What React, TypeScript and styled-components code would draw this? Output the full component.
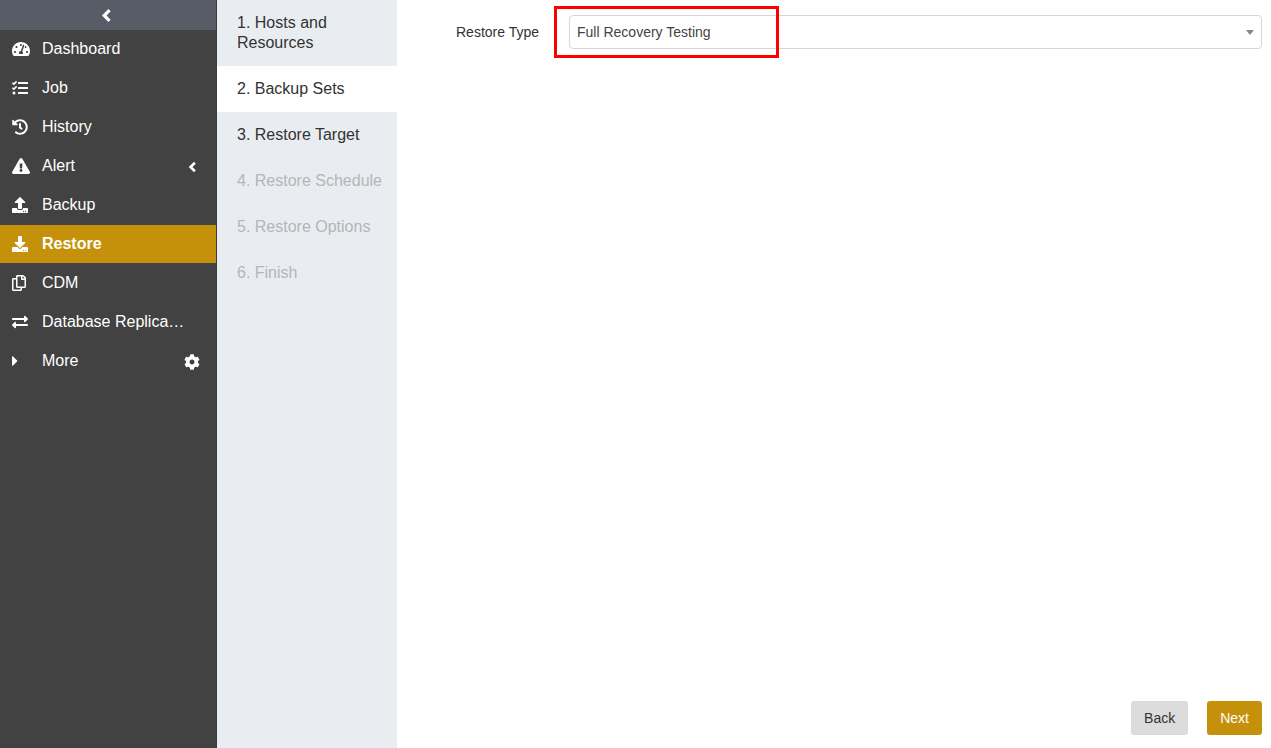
import React from 'react';
import styled, { createGlobalStyle, css } from 'styled-components';
import type { IconType } from 'react-icons';
import {
  FaCaretRight,
  FaCog,
  FaDownload,
  FaExchangeAlt,
  FaExclamationTriangle,
  FaHistory,
  FaRegCopy,
  FaTachometerAlt,
  FaTasks,
  FaUpload,
} from 'react-icons/fa';

const GlobalStyle = createGlobalStyle`
  *, *::before, *::after { box-sizing: border-box; }
  body {
    margin: 0;
    background: #fff;
    color: #333;
    font-family: "Liberation Sans", Arial, sans-serif;
    font-size: 14px;
    line-height: 20px;
  }
  button, select { font: inherit; }
`;

const Page = styled.div`
  display: flex;
  min-height: 100vh;
`;

const Sidebar = styled.aside`
  flex: 0 0 217px;
  background: #424242;
  border-right: 1px solid #3b3b3b;
  color: #fff;
`;

const CollapseButton = styled.button`
  display: flex;
  align-items: center;
  justify-content: center;
  width: 100%;
  height: 30px;
  padding: 0 3px 0 0;
  border: 0;
  background: #575c67;
  color: #fff;
  cursor: pointer;
`;

const Menu = styled.ul`
  display: flex;
  flex-direction: column;
  gap: 1px;
  margin: 0;
  padding: 0;
  list-style: none;
`;

const MenuRow = styled.li<{ $active?: boolean }>`
  display: flex;
  align-items: center;
  height: 38px;
  padding-right: 15px;
  ${({ $active }) =>
    $active &&
    css`
      background: #c5910a;
      font-weight: bold;
    `}
`;

const MenuLink = styled.a`
  display: flex;
  flex: 1;
  align-items: center;
  min-width: 0;
  padding-left: 12px;
  color: inherit;
  font-size: 16px;
  text-decoration: none;
  white-space: nowrap;
`;

const MenuIcon = styled.span<{ $width: number }>`
  display: flex;
  flex: 0 0 30px;

  svg {
    width: ${({ $width }) => $width}px;
    height: 16px;
  }
`;

const RowAction = styled.button`
  display: flex;
  align-items: center;
  justify-content: center;
  min-width: 18px;
  padding: 2px 0 0;
  border: 0;
  background: none;
  color: inherit;
  font-size: 16px;
  cursor: pointer;
`;

const Steps = styled.ol`
  flex: 0 0 180px;
  margin: 0;
  padding: 0;
  background: #e9edf2;
  list-style: none;
`;

const Step = styled.li<{ $state?: 'current' | 'disabled' }>`
  padding: 13px 15px 13px 20px;
  background: ${({ $state }) => ($state === 'current' ? '#fff' : 'transparent')};
  color: ${({ $state }) => ($state === 'disabled' ? '#b5b5b5' : '#333')};
  font-size: 16px;
`;

const Main = styled.main`
  display: flex;
  flex: 1;
  flex-direction: column;
  justify-content: space-between;
  min-width: 0;
  padding: 15px 9px 13px 0;
`;

const Field = styled.div`
  display: grid;
  grid-template-columns: 142px 1fr;
  align-items: center;
  column-gap: 30px;
`;

const FieldLabel = styled.label`
  text-align: right;
`;

const SelectBox = styled.div`
  position: relative;
`;

const Select = styled.select`
  display: block;
  width: 100%;
  height: 34px;
  padding: 0 28px 0 7px;
  border: 1px solid #d2d6de;
  border-radius: 4px;
  background: #fff;
  color: #444;
  appearance: none;
`;

const SelectArrow = styled.span`
  position: absolute;
  top: 15px;
  right: 8px;
  border: 4px solid transparent;
  border-top: 5px solid #888;
  border-bottom: 0;
  pointer-events: none;
`;

const Highlight = styled.span`
  position: absolute;
  top: -9px;
  left: -15px;
  width: 225px;
  height: 52px;
  border: 3px solid #f00;
  pointer-events: none;
`;

const Actions = styled.div`
  display: flex;
  justify-content: flex-end;
  gap: 19px;
`;

const ActionButton = styled.button<{ $primary?: boolean }>`
  padding: 7px 13px;
  border: 0;
  border-radius: 3px;
  background: ${({ $primary }) => ($primary ? '#c5910a' : '#dcdcdc')};
  color: ${({ $primary }) => ($primary ? '#fff' : '#333')};
  cursor: pointer;
`;

function Chevron({ height }: { height: number }) {
  return (
    <svg viewBox="0 0 10 14" height={height} fill="none" stroke="currentColor" strokeWidth="3">
      <path d="M8 2 3 7l5 5" />
    </svg>
  );
}

type MenuItem = {
  label: string;
  icon: IconType;
  iconWidth: number;
  active?: boolean;
  action?: { icon: React.ReactNode; label: string };
};

const menuItems: MenuItem[] = [
  { label: 'Dashboard', icon: FaTachometerAlt, iconWidth: 18 },
  { label: 'Job', icon: FaTasks, iconWidth: 16 },
  { label: 'History', icon: FaHistory, iconWidth: 16 },
  {
    label: 'Alert',
    icon: FaExclamationTriangle,
    iconWidth: 18,
    action: { icon: <Chevron height={12} />, label: 'Expand alerts' },
  },
  { label: 'Backup', icon: FaUpload, iconWidth: 16 },
  { label: 'Restore', icon: FaDownload, iconWidth: 16, active: true },
  { label: 'CDM', icon: FaRegCopy, iconWidth: 14 },
  { label: 'Database Replica…', icon: FaExchangeAlt, iconWidth: 16 },
  {
    label: 'More',
    icon: FaCaretRight,
    iconWidth: 6,
    action: { icon: <FaCog />, label: 'Menu settings' },
  },
];

const steps: { label: string; state?: 'current' | 'disabled' }[] = [
  { label: '1. Hosts and Resources' },
  { label: '2. Backup Sets', state: 'current' },
  { label: '3. Restore Target' },
  { label: '4. Restore Schedule', state: 'disabled' },
  { label: '5. Restore Options', state: 'disabled' },
  { label: '6. Finish', state: 'disabled' },
];

export default function App() {
  return (
    <Page>
      <GlobalStyle />
      <Sidebar>
        <CollapseButton type="button" aria-label="Collapse menu">
          <Chevron height={15} />
        </CollapseButton>
        <nav>
          <Menu>
            {menuItems.map(({ label, icon: Icon, iconWidth, active, action }) => (
              <MenuRow key={label} $active={active}>
                <MenuLink href="#" aria-current={active ? 'page' : undefined}>
                  <MenuIcon $width={iconWidth}>
                    <Icon />
                  </MenuIcon>
                  <span>{label}</span>
                </MenuLink>
                {action && (
                  <RowAction type="button" aria-label={action.label}>
                    {action.icon}
                  </RowAction>
                )}
              </MenuRow>
            ))}
          </Menu>
        </nav>
      </Sidebar>
      <Steps>
        {steps.map(({ label, state }) => (
          <Step key={label} $state={state} aria-current={state === 'current' ? 'step' : undefined}>
            {label}
          </Step>
        ))}
      </Steps>
      <Main>
        <Field>
          <FieldLabel htmlFor="restore-type">Restore Type</FieldLabel>
          <SelectBox>
            <Select id="restore-type" defaultValue="full">
              <option value="full">Full Recovery Testing</option>
            </Select>
            <SelectArrow />
            <Highlight />
          </SelectBox>
        </Field>
        <Actions>
          <ActionButton type="button">Back</ActionButton>
          <ActionButton type="button" $primary>
            Next
          </ActionButton>
        </Actions>
      </Main>
    </Page>
  );
}
